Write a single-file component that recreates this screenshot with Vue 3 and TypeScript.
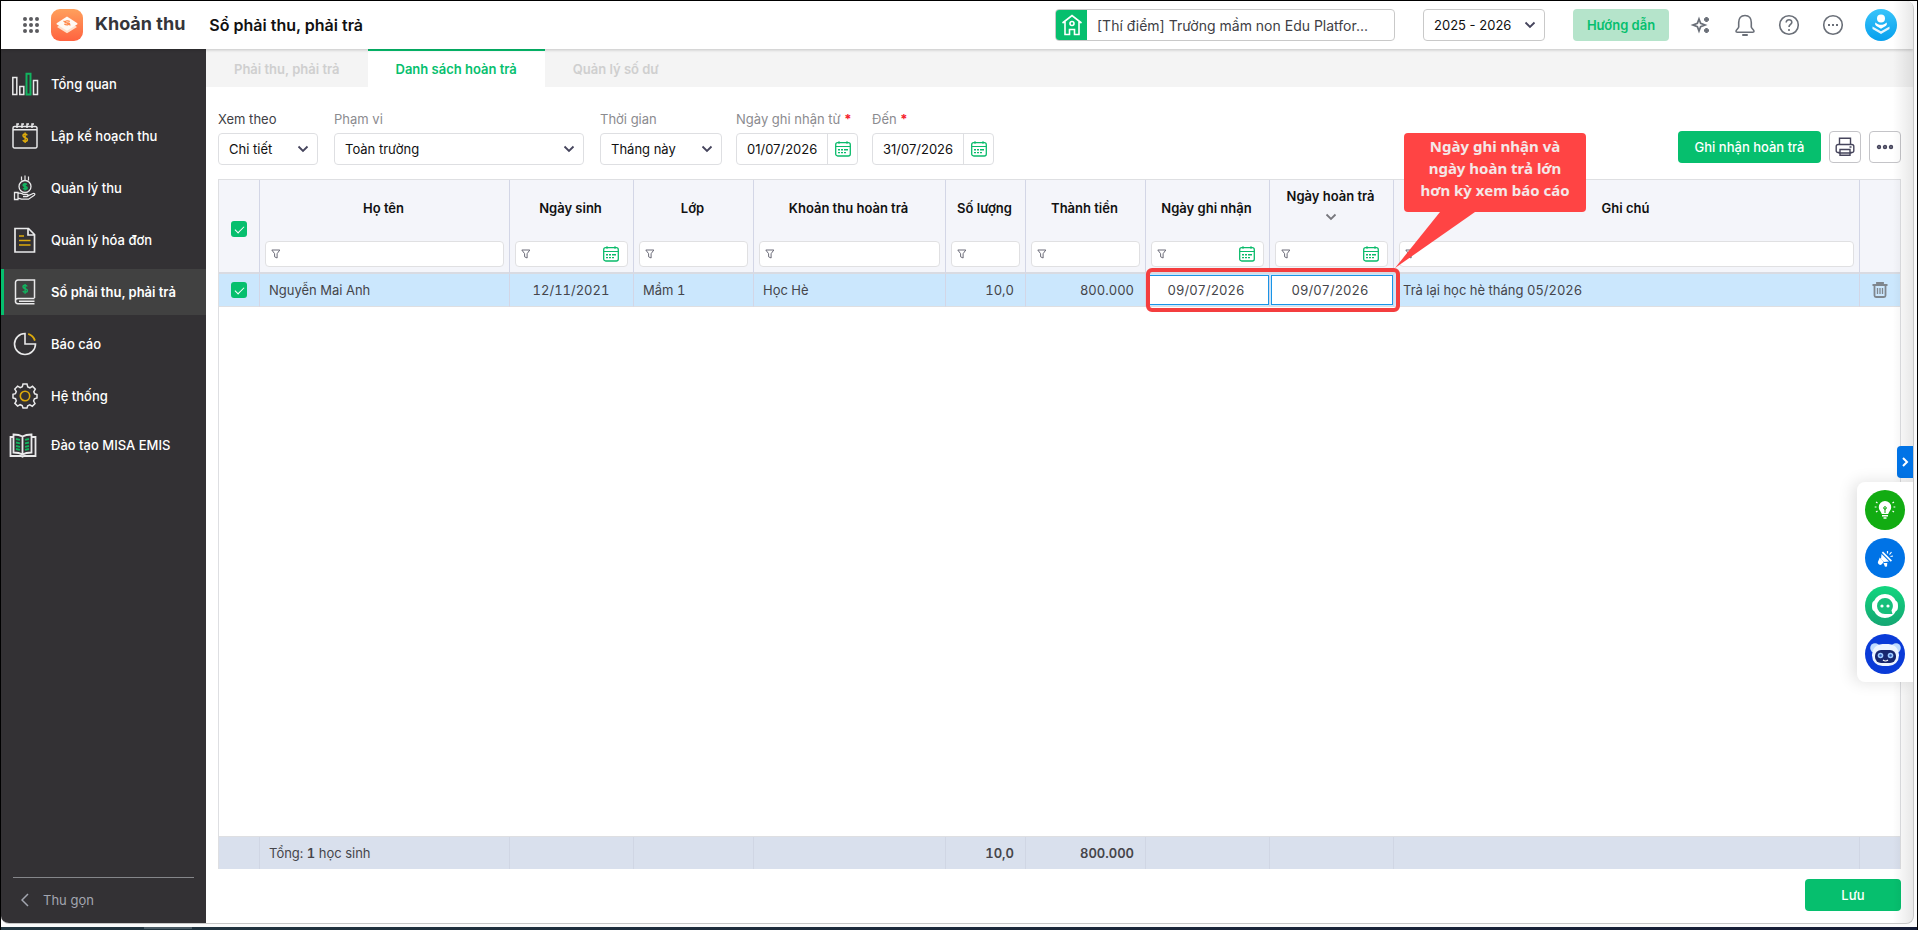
<script setup lang="ts">
import { ref } from 'vue'

interface Stroke {
  d: string
  color?: string
  width?: number
}

interface MenuItem {
  label: string
  active?: boolean
  compact?: boolean
  strokes: Stroke[]
}

interface Column {
  key: string
  title: string
  align: 'left' | 'center' | 'right'
  date?: boolean
  sorted?: boolean
}

const WHITE = '#e9e9ea'
const GREEN = '#12b35f'
const YELLOW = '#dca90c'

const menu: MenuItem[] = [
  {
    label: 'Tổng quan',
    strokes: [
      { d: 'M.8 6.500h4v17h-4zM7.800 15.500h4v8h-4zM21.500 9.500h4v14h-4z', color: WHITE },
      { d: 'M14.500 2.800h4v20.700h-4z', color: GREEN, width: 2 },
    ],
  },
  {
    label: 'Lập kế hoạch thu',
    strokes: [
      { d: 'M2.500 3.500h21a1.500 1.500 0 0 1 1.500 1.500v18.500a1.500 1.500 0 0 1-1.500 1.500h-21a1.500 1.500 0 0 1-1.500-1.500v-18.500a1.500 1.500 0 0 1 1.500-1.500zM1 6.800h24', color: WHITE },
      { d: 'M5 5v-4h2M10 5v-4h2M15 5v-4h2M20 5v-4h2', color: WHITE },
      { d: 'M15.200 12.300c-.4-.8-1.200-1.200-2.100-1.200-1.200 0-2.100.7-2.100 1.700 0 2.500 4.400 1.300 4.400 3.800 0 1.100-1 1.900-2.200 1.900-1.100 0-2-.5-2.300-1.400M13.100 9.500v10.600', color: YELLOW },
    ],
  },
  {
    label: 'Quản lý thu',
    strokes: [
      { d: 'M13 .5v4.500M9.500 1.500v4M16.500 1.500v4', color: WHITE, width: 1.2 },
      { d: 'M13 5.500a6 6 0 1 1 0 12a6 6 0 1 1 0-12', color: WHITE, width: 1.3 },
      { d: 'M14.800 9.700c-.9-1.300-3.600-1-3.600.5 0 1.800 3.900.8 3.900 2.700 0 1.600-3.100 1.700-3.900.3M13 8v7.500', color: GREEN, width: 1.7 },
      { d: 'M2.500 17.500h3.500v7h-3.500zM6 18.500c2.500-1 4 .2 5.500 1h3.500c1.500.2 1.500 2 0 2.200h-4M16 20.800l5-2.300c1.500-.5 2.500.8 1.300 1.700l-5.800 4h-7l-3.500-1', color: WHITE, width: 1.3 },
    ],
  },
  {
    label: 'Quản lý hóa đơn',
    strokes: [
      { d: 'M3 1.500h13.500l6 6v17.500h-19.500zM16 1.500v6.500h6.500', color: WHITE, width: 1.7 },
      { d: 'M7 9h5M7 13.500h11.500M7 18h11.500', color: YELLOW, width: 1.6 },
    ],
  },
  {
    label: 'Sổ phải thu, phải trả',
    active: true,
    strokes: [
      { d: 'M22.500 19v-18h-16.500a2.500 2.500 0 0 0-2.500 2.500v18.500M22.500 19.500h-16.500a2.400 2.400 0 0 0 0 5.200h16.500M7 22.200h15.500', color: WHITE },
      { d: 'M15.200 7.500c-.4-.8-1.200-1.200-2.100-1.200-1.200 0-2.100.7-2.100 1.600 0 2.300 4.400 1.200 4.400 3.600 0 1.100-1 1.800-2.200 1.800-1.100 0-2-.5-2.300-1.300M13.100 5v9.800', color: GREEN, width: 1.4 },
    ],
  },
  {
    label: 'Báo cáo',
    strokes: [
      { d: 'M13 2.500a10.500 10.500 0 1 0 10.500 10.500h-10.500z', color: WHITE, width: 1.6 },
      { d: 'M16.200 2.900a10.500 10.500 0 0 1 6.700 6.700', color: YELLOW, width: 1.8 },
    ],
  },
  {
    label: 'Hệ thống',
    strokes: [
      { d: 'M11 1h4l.8 2.900 2.100.9 2.600-1.500 2.800 2.800-1.500 2.600.9 2.100 2.300.7v3.500l-2.600.8-.8 2.200 1.400 2.500-2.700 2.700-2.500-1.400-2.100.9-.7 2.300h-4l-.8-2.400-2.100-.9-2.500 1.400-2.700-2.700 1.400-2.500-.8-2.200-2.500-.7v-3.600l2.400-.7.9-2.100-1.500-2.600 2.800-2.800 2.600 1.500 2.100-.9z', color: WHITE },
      { d: 'M13 8.300a4.700 4.700 0 1 1 0 9.400a4.700 4.700 0 1 1 0-9.400', color: YELLOW, width: 1.6 },
    ],
  },
  {
    label: 'Đào tạo MISA EMIS',
    compact: true,
    strokes: [
      { d: 'M10.500 4.500c-2.500-1.500-6-2-9-2v18c3 0 6.500.5 9 2c2.500-1.500 6-2 9-2v-18c-3 0-6.500.5-9 2zv18M1.500 5h-3v19h10.500l1.500.8 1.500-.8h11.500v-19h-4', color: WHITE, width: 1.8 },
      { d: 'M4 7l4 .8M4 10.500l4 .8M4 14l4 .8M4 17l4 .8M17 7l-4 .8M17 10.500l-4 .8M17 14l-4 .8M17 17l-4 .8', color: GREEN, width: 1.8 },
    ],
  },
]

const tabs = ['Phải thu, phải trả', 'Danh sách hoàn trả', 'Quản lý số dư']
const activeTab = ref(1)

const selects = [
  { id: 'view', label: 'Xem theo', value: 'Chi tiết', size: 'small', dark: true },
  { id: 'scope', label: 'Phạm vi', value: 'Toàn trường', size: 'large', dark: false },
  { id: 'period', label: 'Thời gian', value: 'Tháng này', size: 'medium', dark: false },
]

const dates = ref([
  { id: 'from', label: 'Ngày ghi nhận từ', value: '01/07/2026' },
  { id: 'to', label: 'Đến', value: '31/07/2026' },
])

const columns: Column[] = [
  { key: 'name', title: 'Họ tên', align: 'left' },
  { key: 'birth', title: 'Ngày sinh', align: 'center', date: true },
  { key: 'group', title: 'Lớp', align: 'left' },
  { key: 'fee', title: 'Khoản thu hoàn trả', align: 'left' },
  { key: 'qty', title: 'Số lượng', align: 'right' },
  { key: 'amount', title: 'Thành tiền', align: 'right' },
  { key: 'recorded', title: 'Ngày ghi nhận', align: 'center', date: true },
  { key: 'refunded', title: 'Ngày hoàn trả', align: 'center', date: true, sorted: true },
  { key: 'note', title: 'Ghi chú', align: 'left' },
]

const editable = ['recorded', 'refunded']

const rows = ref<Record<string, string>[]>([
  {
    name: 'Nguyễn Mai Anh',
    birth: '12/11/2021',
    group: 'Mầm 1',
    fee: 'Học Hè',
    qty: '10,0',
    amount: '800.000',
    recorded: '09/07/2026',
    refunded: '09/07/2026',
    note: 'Trả lại học hè tháng 05/2026',
  },
])
const allChecked = ref(true)
</script>

<template>
  <div class="screen">
    <svg class="defs" aria-hidden="true">
      <symbol id="chevron" viewBox="0 0 12 12">
        <path d="M1.500 3.500l4.500 4.500 4.500-4.500" fill="none" stroke="currentColor" stroke-width="1.800" />
      </symbol>
      <symbol id="calendar" viewBox="0 0 16 16">
        <rect x=".7" y="1.700" width="14.600" height="13.300" rx="2" fill="none" stroke="#0abb6b" stroke-width="1.300" />
        <path d="M.7 5.500h14.600M4 .3v2.400M12 .3v2.400" fill="none" stroke="#0abb6b" stroke-width="1.200" />
        <path d="M3 8.800h2M6 8.800h2M9 8.800h4M3 11.600h2M6 11.600h2M9 11.600h2" fill="none" stroke="#0abb6b" stroke-width="1.400" />
      </symbol>
      <symbol id="funnel" viewBox="0 0 10 10">
        <path d="M.8 1h8l-2.700 3.700v4.300l-2.500-1.200v-3.100z" fill="none" stroke="#6b6b78" stroke-width="1" />
      </symbol>
    </svg>

    <div class="stage">
      <div class="window">
        <header class="topbar">
          <button class="apps" aria-label="Ứng dụng">
            <svg viewBox="0 0 16 16" width="16" height="16" fill="#5b5b5f">
              <template v-for="r in 3" :key="r">
                <circle v-for="c in 3" :key="c" :cx="c * 6 - 4" :cy="r * 6 - 4" r="2" />
              </template>
            </svg>
          </button>
          <svg class="logo" viewBox="0 0 32 32" width="32" height="32">
            <defs>
              <linearGradient id="orange" x1="0" y1="0" x2="0" y2="1">
                <stop offset="0" stop-color="#ffa05c" />
                <stop offset="1" stop-color="#ff6340" />
              </linearGradient>
            </defs>
            <rect width="32" height="32" rx="9" fill="url(#orange)" />
            <path d="M6 18l10 6.300 10-6.300-3-2-7 4.500-7-4.500z" fill="#ffe0cc" />
            <path d="M16 7.500l10 6.500c.7.500.7 1 0 1.500l-10 6.300-10-6.300c-.7-.5-.7-1 0-1.500z" fill="#fffaf4" />
            <path d="M18.800 12.500c-1.500-1.200-5-.8-4.800.8.2 1.300 4-.2 4.500 1.100.4 1.500-3.300 1.900-5.200.6M12.500 12l7 4.200" fill="none" stroke="#ff8b4d" stroke-width="1.300" />
          </svg>
          <span class="brand">Khoản thu</span>
          <h1 class="page-title">Sổ phải thu, phải trả</h1>

          <button class="school">
            <span class="school-icon">
              <svg viewBox="0 0 22 22" width="22" height="22" fill="none" stroke="#fff" stroke-width="1.600">
                <path d="M1.500 9l9.500-7.500 9.500 7.500M4 7.500v13h4.500v-5h5v5h4.500v-13" />
                <circle cx="11" cy="9.500" r="2" />
              </svg>
            </span>
            <span class="school-name">[Thí điểm] Trường mầm non Edu Platfor...</span>
          </button>

          <span class="select year">
            <select aria-label="Năm học"><option>2025 - 2026</option></select>
            <svg width="12" height="12"><use href="#chevron" /></svg>
          </span>

          <button class="guide">Hướng dẫn</button>

          <nav class="tools" aria-label="Công cụ">
            <button aria-label="Trợ lý AI">
              <svg viewBox="0 0 24 24" width="24" height="24" fill="none" stroke="#6a6f78" stroke-width="1.700">
                <path d="M10 6l1.600 4.400 4.400 1.600-4.400 1.600-1.600 4.400-1.600-4.400-4.400-1.600 4.400-1.600z" />
                <path d="M17.500 4v5M15 6.500h5M17.500 15v5M15 17.500h5" stroke-width="2.400" />
              </svg>
            </button>
            <button aria-label="Thông báo">
              <svg viewBox="0 0 24 24" width="24" height="24" fill="none" stroke="#6a6f78" stroke-width="1.600">
                <path d="M12 2.500c-4.300 0-6.300 3.300-6.300 7v4.500c0 1.300-2.700 2.700-2.700 4.200 0 .6.600 1 1.300 1h15.400c.7 0 1.300-.4 1.300-1 0-1.500-2.700-2.900-2.700-4.200v-4.500c0-3.700-2-7-6.300-7z" />
                <path d="M10 22h4" stroke-width="2" stroke-linecap="round" />
              </svg>
            </button>
            <button aria-label="Trợ giúp">
              <svg viewBox="0 0 24 24" width="24" height="24" fill="none" stroke="#6a6f78" stroke-width="1.600">
                <circle cx="12" cy="12" r="9.300" />
                <path d="M9.200 9.500c0-3.800 5.800-3.500 5.600-.1-.1 2-2.800 2.100-2.800 4.700M12 16v2" />
              </svg>
            </button>
            <button aria-label="Thêm">
              <svg viewBox="0 0 24 24" width="24" height="24" fill="none" stroke="#6a6f78" stroke-width="1.600">
                <circle cx="12" cy="12" r="9.300" />
                <path d="M7 12h2M11 12h2M15 12h2" stroke-width="1.800" />
              </svg>
            </button>
          </nav>

          <button class="avatar" aria-label="Tài khoản">
            <svg viewBox="0 0 32 32" width="32" height="32">
              <defs>
                <linearGradient id="sky" x1="0" y1="0" x2="0" y2="1">
                  <stop offset="0" stop-color="#38c4fa" />
                  <stop offset="1" stop-color="#07a0ee" />
                </linearGradient>
              </defs>
              <circle cx="16" cy="16" r="16" fill="url(#sky)" />
              <circle cx="16" cy="9.500" r="4" fill="#fff" />
              <path d="M10.500 13.500c1.500 1.500 3.500 2.300 5.500 2.300s4-.8 5.500-2.300c.8 1.500.3 2.800-.8 3.500l-4.700 2.800-4.700-2.800c-1.100-.7-1.600-2-.8-3.500z" fill="#fff" />
              <path d="M7.500 17.500l8.500 4.800 8.500-4.800v2.500l-8.500 5-8.500-5z" fill="#e4f5fe" />
            </svg>
          </button>
        </header>

        <div class="body">
          <aside class="sidebar">
            <nav class="menu">
              <a
                v-for="item in menu"
                :key="item.label"
                href="#"
                class="menu-item"
                :class="{ active: item.active, compact: item.compact }"
              >
                <svg class="menu-icon" viewBox="0 0 26 26" width="26" height="26">
                  <path
                    v-for="(s, i) in item.strokes"
                    :key="i"
                    :d="s.d"
                    :stroke="s.color"
                    :stroke-width="s.width ?? 1.5"
                    fill="none"
                  />
                </svg>
                <span>{{ item.label }}</span>
              </a>
            </nav>
            <button class="collapse">
              <svg viewBox="0 0 8 14" width="8" height="14">
                <path d="M7 1l-6 6 6 6" fill="none" stroke="#a3a6b0" stroke-width="1.500" />
              </svg>
              Thu gọn
            </button>
          </aside>

          <main class="content">
            <div class="tabs" role="tablist">
              <button
                v-for="(tab, i) in tabs"
                :key="tab"
                role="tab"
                class="tab"
                :class="{ on: i === activeTab }"
                :aria-selected="i === activeTab"
                @click="activeTab = i"
              >
                {{ tab }}
              </button>
            </div>

            <div class="page">
              <div class="filters">
                <div v-for="s in selects" :key="s.id" class="field" :class="s.size">
                  <label :for="s.id" :class="{ dark: s.dark }">{{ s.label }}</label>
                  <span class="select">
                    <select :id="s.id"><option>{{ s.value }}</option></select>
                    <svg width="12" height="12"><use href="#chevron" /></svg>
                  </span>
                </div>
                <div v-for="d in dates" :key="d.id" class="field medium">
                  <label :for="d.id">{{ d.label }} <b class="required">*</b></label>
                  <span class="date-box">
                    <input :id="d.id" v-model="d.value" type="text" />
                    <button :aria-label="'Chọn ngày: ' + d.label">
                      <svg width="16" height="16"><use href="#calendar" /></svg>
                    </button>
                  </span>
                </div>

                <div class="actions">
                  <button class="primary">Ghi nhận hoàn trả</button>
                  <button class="square" aria-label="In">
                    <svg viewBox="0 0 20 20" width="20" height="20" fill="none" stroke="#46455c" stroke-width="1.400">
                      <path d="M4.500 7.500v-6.300h11v6.300M4.500 15.500h-1.500a1.800 1.800 0 0 1-1.800-1.800v-4.200a2 2 0 0 1 2-2h13.600a2 2 0 0 1 2 2v4.200a1.800 1.800 0 0 1-1.800 1.800h-1.500M5 12.500h10v5.800h-10zM3.500 16h13M14.500 10h2" />
                    </svg>
                  </button>
                  <button class="square" aria-label="Tùy chọn khác">
                    <svg viewBox="0 0 18 6" width="18" height="6" fill="#8b8a99" stroke="#46455c" stroke-width="1.400">
                      <circle cx="3" cy="3" r="1.500" />
                      <circle cx="9" cy="3" r="1.500" />
                      <circle cx="15" cy="3" r="1.500" />
                    </svg>
                  </button>
                </div>
              </div>

              <section class="grid">
                <table class="table">
                  <colgroup>
                    <col class="c-check" />
                    <col v-for="c in columns" :key="c.key" :class="'c-' + c.key" />
                    <col class="c-tools" />
                  </colgroup>
                  <thead>
                    <tr>
                      <th class="check">
                        <input v-model="allChecked" type="checkbox" aria-label="Chọn tất cả" />
                      </th>
                      <th v-for="c in columns" :key="c.key" scope="col">
                        <div class="head" :class="{ sorted: c.sorted }">
                          <span>{{ c.title }}</span>
                          <svg v-if="c.sorted" class="sort" width="12" height="12"><use href="#chevron" /></svg>
                        </div>
                        <div class="filter">
                          <svg width="10" height="10"><use href="#funnel" /></svg>
                          <input type="text" :aria-label="'Lọc ' + c.title" />
                          <button v-if="c.date" :aria-label="'Chọn ngày ' + c.title">
                            <svg width="16" height="16"><use href="#calendar" /></svg>
                          </button>
                        </div>
                      </th>
                      <th></th>
                    </tr>
                  </thead>
                  <tbody>
                    <tr v-for="row in rows" :key="row.name">
                      <td class="check">
                        <input v-model="allChecked" type="checkbox" :aria-label="'Chọn ' + row.name" />
                      </td>
                      <td v-for="c in columns" :key="c.key" :class="[c.align, { edit: editable.includes(c.key) }]">
                        <input
                          v-if="editable.includes(c.key)"
                          v-model="row[c.key]"
                          class="cell-input"
                          type="text"
                          :aria-label="c.title"
                        />
                        <template v-else>{{ row[c.key] }}</template>
                      </td>
                      <td class="tool">
                        <button aria-label="Xóa">
                          <svg viewBox="0 0 16 16" width="16" height="16" fill="none" stroke="#7f868d" stroke-width="1.800">
                            <path d="M.5 3h15M5 2.500v-1.500h6v1.500M2.500 3v10.500a1.500 1.500 0 0 0 1.500 1.500h8a1.500 1.500 0 0 0 1.500-1.500v-10.500" />
                            <path d="M5.500 6v6M8 6v6M10.500 6v6" stroke-width="1.300" />
                          </svg>
                        </button>
                      </td>
                    </tr>
                  </tbody>
                </table>

                <div class="empty"></div>

                <table class="table totals" aria-label="Tổng cộng">
                  <colgroup>
                    <col class="c-check" />
                    <col v-for="c in columns" :key="c.key" :class="'c-' + c.key" />
                    <col class="c-tools" />
                  </colgroup>
                  <tbody>
                    <tr>
                      <td></td>
                      <td>Tổng: <b>1</b> học sinh</td>
                      <td></td>
                      <td></td>
                      <td></td>
                      <td class="right"><b>10,0</b></td>
                      <td class="right"><b>800.000</b></td>
                      <td></td>
                      <td></td>
                      <td></td>
                      <td></td>
                    </tr>
                  </tbody>
                </table>

                <div class="mark"></div>
                <svg class="pointer" viewBox="0 0 80 56" width="80" height="56">
                  <path d="M45 0h35l-80 56z" fill="#ff4444" />
                </svg>
                <p class="callout">Ngày ghi nhận và<br />ngày hoàn trả lớn<br />hơn kỳ xem báo cáo</p>
              </section>

              <footer class="page-foot">
                <button class="primary save">Lưu</button>
              </footer>
            </div>
          </main>
        </div>

        <div class="edge"></div>
        <div class="dock">
          <button class="dock-toggle" aria-label="Mở rộng">
            <svg viewBox="0 0 8 10" width="8" height="10">
              <path d="M2 1l4 4-4 4" fill="none" stroke="#fff" stroke-width="2" />
            </svg>
          </button>
          <div class="dock-panel">
            <button class="bulb" aria-label="Góp ý">
              <svg viewBox="0 0 40 40" width="40" height="40">
                <path d="M20 11a6.200 6.200 0 0 0-6.200 6.200c0 3 2.200 4.200 3 6.800h6.400c.8-2.600 3-3.800 3-6.800a6.200 6.200 0 0 0-6.200-6.200zM17 25h6v1.500h-6zM18.500 27.300h3v1.400h-3z" fill="#fff" />
                <path d="M20 23v-5M18.700 18a1.300 1.300 0 1 0 2.600 0a1.300 1.300 0 1 0-2.600 0" fill="none" stroke="#12a812" />
                <path d="M12.500 13l-1.500-1M11.500 17h-1.800M12.500 21l-1.500 1M27.500 13l1.500-1M28.500 17h1.800M27.500 21l1.500 1" stroke="#fff" stroke-width="1.200" />
              </svg>
            </button>
            <button class="horn" aria-label="Tin mới">
              <svg viewBox="0 0 40 40" width="40" height="40" fill="#fff">
                <path d="M18 13.500l9 9-1.200 1.200-9-9z" />
                <path d="M16.500 16l7.500 7.500-5 .5-3-3z" />
                <path d="M14.800 19.500l4 4.500-2.300 2.600c-2.200 1.200-4.600-1.600-3.200-3.600z" />
                <path d="M18.500 25h3.800l-.3 3.500-2 .3z" />
                <path d="M22.500 15.500v-2.500M24.500 16.500l2-2.500M25.500 18.500l2.500-.5" fill="none" stroke="#fff" stroke-width="1.200" />
              </svg>
            </button>
            <button class="chat" aria-label="Trò chuyện">
              <svg viewBox="0 0 40 40" width="40" height="40">
                <path d="M20 8a12 12 0 0 1 10.800 6.800c1.700.8 2.200 2.300 2.200 5.200s-.5 4.400-2.200 5.200a12 12 0 0 1-21.600 0c-1.700-.8-2.200-2.300-2.200-5.200s.5-4.400 2.200-5.200a12 12 0 0 1 10.800-6.800z" fill="#fff" />
                <path d="M20 12a8 8 0 0 1 6.500 12.500l1 3.500h-7.500a8 8 0 0 1 0-16z" fill="#17bf7b" />
                <circle cx="17" cy="20" r="1.600" fill="#fff" />
                <circle cx="23" cy="20" r="1.600" fill="#fff" />
              </svg>
            </button>
            <button class="panda" aria-label="Trợ lý ảo">
              <svg viewBox="0 0 40 40" width="40" height="40">
                <circle cx="10" cy="14" r="4.800" fill="#bfdcff" />
                <circle cx="31" cy="14" r="4.800" fill="#bfdcff" />
                <rect x="7" y="10" width="27" height="22" rx="10.500" fill="#edf5ff" />
                <rect x="10" y="16" width="21" height="13" rx="6" fill="#17266e" />
                <circle cx="15.500" cy="21.500" r="2.800" fill="#9fcbff" />
                <circle cx="25.500" cy="21.500" r="2.800" fill="#9fcbff" />
                <circle cx="15.500" cy="21.500" r="1.200" fill="#2b57b8" />
                <circle cx="25.500" cy="21.500" r="1.200" fill="#2b57b8" />
                <path d="M18 26c1.500 1.200 3.500 1.200 5 0" fill="none" stroke="#fff" stroke-width="1.200" />
              </svg>
            </button>
          </div>
        </div>
      </div>
      <div class="taskbar"><span></span></div>
    </div>
  </div>
</template>

<style>
body {
  margin: 0;
}
</style>

<style scoped>
.screen,
.screen * {
  box-sizing: border-box;
}
.screen {
  height: 100vh;
  padding: 1px 1px 0;
  background: #000;
  font-family: Inter, "Noto Sans", sans-serif;
  font-size: 13px;
  line-height: 20px;
  color: #212121;
}
.defs {
  position: absolute;
  width: 0;
  height: 0;
}
button,
input,
select {
  font: inherit;
  font-variant-numeric: inherit;
  color: inherit;
}
button {
  padding: 0;
  border: 0;
  background: none;
  cursor: pointer;
}
svg {
  display: block;
  flex: none;
}
.stage {
  height: 100%;
  display: flex;
  flex-direction: column;
  background: #fbfbfb;
}
.window {
  position: relative;
  flex: 1;
  min-height: 0;
  display: flex;
  flex-direction: column;
  margin: 0 3px 3px 0;
  border: solid #c8c8c8;
  border-width: 0 1px 1px 0;
  border-radius: 8px;
  overflow: hidden;
  background: #fff;
}
.taskbar {
  height: 3px;
  padding-left: 143px;
  background: linear-gradient(90deg, #223640, #151c36);
}
.taskbar span {
  display: block;
  width: 48px;
  height: 2px;
  background: #4b5c66;
}

/* Top bar */
.topbar {
  position: relative;
  z-index: 1;
  height: 48px;
  flex: none;
  display: flex;
  align-items: center;
  padding: 0 16px 0 22px;
  background: #fff;
  box-shadow: 0 1px 3px rgba(0, 0, 0, 0.2);
}
.logo {
  margin: 0 12px;
}
.brand {
  margin-bottom: 2px;
  font-size: 18px;
  font-weight: 700;
  color: #35353a;
}
.page-title {
  flex: 1;
  margin: 0 0 0 24px;
  font-size: 16px;
  font-weight: 600;
  color: #111;
}
.school {
  display: flex;
  width: 340px;
  height: 32px;
  border: 1px solid #c9c9c9;
  border-radius: 4px;
  overflow: hidden;
  font-size: 14px;
  color: #404045;
}
.school-icon {
  width: 31px;
  height: 100%;
  display: grid;
  place-items: center;
  background: #06bf6e;
}
.school-name {
  padding-left: 10px;
  line-height: 32px;
  white-space: nowrap;
}
.select {
  position: relative;
  display: block;
}
.select select {
  width: 100%;
  height: 32px;
  padding: 0 28px 0 10px;
  border: 1px solid #dedfe2;
  border-radius: 4px;
  background: #fff;
  color: #111;
  appearance: none;
}
.select svg {
  position: absolute;
  top: 10px;
  right: 9px;
  color: #45445c;
  pointer-events: none;
}
.year {
  width: 122px;
  margin: 0 28px;
}
.year select {
  border-color: #c9c9c9;
}
.guide {
  width: 96px;
  height: 32px;
  border-radius: 4px;
  background: #b5e4cb;
  color: #06bf6e;
  font-weight: 600;
}
.tools {
  display: flex;
  gap: 20px;
  margin: 0 20px;
}
.avatar {
  border-radius: 50%;
}

/* Sidebar */
.body {
  flex: 1;
  min-height: 0;
  display: flex;
}
.sidebar {
  width: 205px;
  flex: none;
  display: flex;
  flex-direction: column;
  justify-content: space-between;
  background: #333134;
}
.menu {
  display: flex;
  flex-direction: column;
  gap: 6px;
  padding-top: 12px;
}
.menu-item {
  height: 46px;
  display: flex;
  align-items: center;
  gap: 13px;
  padding-left: 8px;
  border-left: 3px solid transparent;
  color: #fff;
  font-weight: 500;
  text-decoration: none;
}
.menu-item.active {
  border-color: #06bf6e;
  background: #414141;
  font-weight: 600;
}
.menu-item.compact {
  height: 40px;
}
.menu-icon {
  overflow: visible;
}
.collapse {
  height: 46px;
  display: flex;
  align-items: center;
  gap: 14px;
  margin: 0 12px;
  padding: 0 0 2px 8px;
  border-top: 1px solid #85868a;
  color: #a3a6b0;
}

/* Tabs */
.content {
  flex: 1;
  min-width: 0;
  display: flex;
  flex-direction: column;
}
.tabs {
  height: 38px;
  flex: none;
  display: flex;
  background: #f4f4f4;
}
.tab {
  padding: 0 28px;
  border-top: 2px solid transparent;
  color: #cfcfcf;
  font-weight: 600;
}
.tab.on {
  border-color: #06bf6e;
  background: #fff;
  color: #06bf6e;
}

/* Filters */
.page {
  flex: 1;
  min-height: 0;
  display: flex;
  flex-direction: column;
  padding: 22px 12px 12px;
}
.filters {
  display: flex;
  align-items: flex-end;
  gap: 14px;
}
.field label {
  display: block;
  margin-bottom: 4px;
  color: #8b8b8f;
}
.field label.dark {
  color: #404045;
}
.field.small {
  width: 100px;
  margin-right: 2px;
}
.field.medium {
  width: 122px;
}
.field.large {
  width: 250px;
  margin-right: 2px;
}
.required {
  color: #f5222d;
}
.date-box {
  display: flex;
  height: 32px;
  border: 1px solid #dedfe2;
  border-radius: 4px;
}
.date-box input {
  flex: 1;
  min-width: 0;
  padding: 0 0 0 10px;
  border: 0;
  background: none;
  color: #111;
}
.date-box button {
  width: 30px;
  display: grid;
  place-items: center;
  border-left: 1px solid #dedfe2;
}
.actions {
  display: flex;
  gap: 8px;
  margin: 0 0 2px auto;
}
.primary {
  width: 143px;
  height: 32px;
  border-radius: 4px;
  background: #06bf6e;
  color: #fff;
  font-weight: 500;
}
.square {
  width: 32px;
  height: 32px;
  display: grid;
  place-items: center;
  border: 1px solid #c4c4c8;
  border-radius: 4px;
}

/* Data grid */
.grid {
  position: relative;
  flex: 1;
  min-height: 0;
  display: flex;
  flex-direction: column;
  margin-top: 14px;
  border: 1px solid #dedfe2;
  border-bottom: 0;
}
.table {
  width: 100%;
  table-layout: fixed;
  border-collapse: separate;
  border-spacing: 0;
}
.c-check {
  width: 41px;
}
.c-name {
  width: 250px;
}
.c-birth,
.c-recorded,
.c-refunded {
  width: 124px;
}
.c-group,
.c-amount {
  width: 120px;
}
.c-fee {
  width: 192px;
}
.c-qty {
  width: 80px;
}
.c-tools {
  width: 40px;
}
th,
td {
  padding: 0;
  border-right: 1px solid #d3d6e6;
}
th:last-child,
td:last-child {
  border-right: 0;
}
th {
  background: #f4f5fa;
  border-bottom: 2px solid #d9dbe2;
  font-weight: 600;
  color: #111;
}
.head {
  height: 57px;
  display: flex;
  flex-direction: column;
  align-items: center;
  justify-content: center;
  gap: 5px;
  padding: 0 2px 2px 0;
}
.head.sorted {
  padding-bottom: 8px;
}
.sort {
  color: #77777d;
}
.filter {
  height: 26px;
  display: flex;
  align-items: center;
  margin: 4px 5px 5px;
  padding: 0 8px 0 5px;
  border: 1px solid #e0e0e2;
  border-radius: 4px;
  background: #fff;
}
.filter input {
  flex: 1;
  min-width: 0;
  width: 0;
  height: 22px;
  border: 0;
  padding: 0 4px;
  background: none;
}
.check {
  text-align: center;
}
th.check {
  padding-top: 6px;
}
.check input {
  display: block;
  width: 16px;
  height: 16px;
  margin: 0 auto;
  border-radius: 3px;
  appearance: none;
  background: #06bf6e;
}
.check input:checked::before {
  content: "";
  display: block;
  width: 8px;
  height: 4px;
  margin: 5px 0 0 4px;
  border: solid #fff;
  border-width: 0 0 1px 1px;
  transform: rotate(-45deg);
}
td {
  height: 33px;
  padding: 0 10px 0 9px;
  background: #cbe7fd;
  border-bottom: 1px solid #dedfe2;
  font-variant-numeric: tabular-nums;
  color: #45454a;
  white-space: nowrap;
}
td.check,
td.tool {
  padding: 0;
}
td.center {
  text-align: center;
}
td.right {
  padding-right: 11px;
  text-align: right;
}
td.edit {
  padding: 1px 0 1px 1px;
}
.cell-input {
  display: block;
  width: 100%;
  height: 30px;
  padding: 0 4px 0 0;
  border: 1px solid #1a94e6;
  text-align: center;
  background: #fff;
}
.tool button {
  display: block;
  margin: 0 auto;
}
.empty {
  flex: 1;
  border-bottom: 1px solid #dedfe2;
}
.totals td {
  height: 32px;
  border-bottom: 0;
  border-right-color: #d0d6e4;
  background: #d9e0ed;
}
.totals b {
  font-weight: 600;
}

/* Annotation over the grid */
.mark {
  position: absolute;
  top: 88px;
  left: 927px;
  width: 254px;
  height: 44px;
  border: 4px solid #f43e3f;
  border-radius: 6px;
}
.pointer {
  position: absolute;
  top: 32px;
  left: 1176px;
}
.callout {
  position: absolute;
  top: -47px;
  left: 1185px;
  width: 182px;
  margin: 0;
  padding: 2px 0 11px;
  border-radius: 4px;
  background: #ff4444;
  color: #f4e8e8;
  font: bold 15px/22px "Noto Sans", sans-serif;
  text-align: center;
}

.page-foot {
  display: flex;
  justify-content: flex-end;
  padding-top: 10px;
}
.save {
  width: 96px;
}

/* Right edge dock */
.edge {
  position: absolute;
  z-index: 2;
  inset: 0 0 0 auto;
  width: 20px;
  background: linear-gradient(90deg, transparent, rgba(0, 0, 0, 0.09));
  pointer-events: none;
}
.dock {
  position: absolute;
  z-index: 3;
  top: 445px;
  right: 0;
  display: flex;
  flex-direction: column;
  align-items: flex-end;
  gap: 4px;
}
.dock-toggle {
  width: 16px;
  height: 32px;
  display: grid;
  place-items: center;
  border-radius: 4px 0 0 4px;
  background: #0073e6;
}
.dock-panel {
  display: flex;
  flex-direction: column;
  gap: 8px;
  padding: 8px;
  border-radius: 8px 0 0 8px;
  background: #fff;
  box-shadow: -4px 0 16px rgba(0, 0, 0, 0.12);
}
.dock-panel button {
  width: 40px;
  height: 40px;
  border-radius: 50%;
}
.bulb {
  background: #12ac12;
}
.horn {
  background: #0073e6;
}
.chat {
  background: linear-gradient(#12d67f, #15a673);
}
.panda {
  background: #0a3bd8;
}
</style>
